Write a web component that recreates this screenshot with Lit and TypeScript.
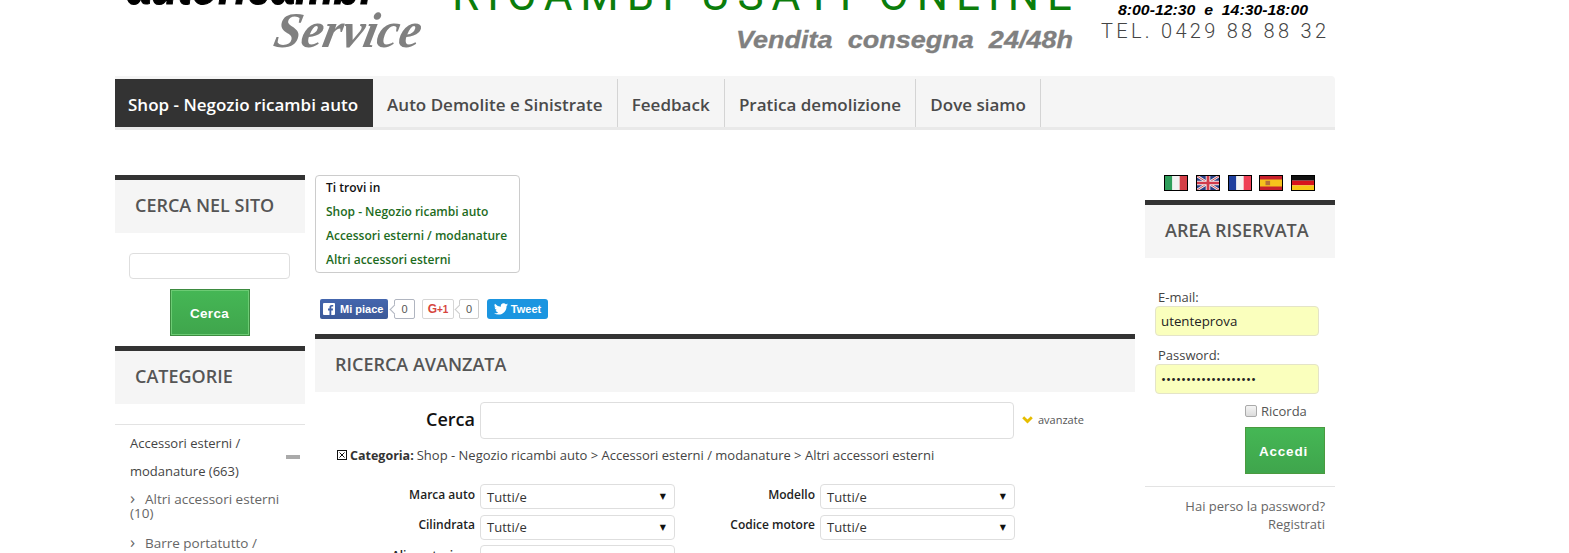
import { LitElement, html, css, svg } from "lit";
import { customElement } from "lit/decorators.js";

const banner = svg`
  <text x="12" y="4" font-family="Liberation Sans" font-weight="700" font-style="italic" font-size="58" fill="#000" stroke="#000" stroke-width="1.2" textLength="245" lengthAdjust="spacingAndGlyphs">autoricambi</text>
  <text transform="translate(157 47) skewX(-12)" font-family="Liberation Serif" font-weight="700" font-style="italic" font-size="50" fill="#808080" textLength="146" lengthAdjust="spacingAndGlyphs">Service</text>
  <text x="337" y="10" font-family="Roboto" font-weight="400" font-size="44" fill="#0b7d0b" textLength="620">RICAMBI USATI ONLINE</text>
  <text x="621" y="48" font-family="Liberation Sans" font-weight="700" font-style="italic" font-size="23" fill="#808080" stroke="#808080" stroke-width="0.3" textLength="337" lengthAdjust="spacingAndGlyphs">Vendita  consegna  24/48h</text>
  <text x="1003" y="15" font-family="Liberation Sans" font-weight="700" font-style="italic" font-size="15" fill="#000" textLength="190" lengthAdjust="spacingAndGlyphs">8:00-12:30  e  14:30-18:00</text>
  <text x="986" y="38" font-family="Roboto" font-weight="300" font-size="20" fill="#444" textLength="225">TEL. 0429 88 88 32</text>
`;

const flags = [
  svg`<rect width="8" height="16" fill="#2f9e5b"/><rect x="8" width="8" height="16" fill="#f2f2f2"/><rect x="16" width="8" height="16" fill="#d43f47"/>`,
  svg`<rect width="24" height="16" fill="#2b3f86"/><path d="M0 0L24 16M24 0L0 16" stroke="#eee" stroke-width="3"/><path d="M0 0L24 16M24 0L0 16" stroke="#d23b4b" stroke-width="1"/><path d="M12 0V16M0 8H24" stroke="#eee" stroke-width="5"/><path d="M12 0V16M0 8H24" stroke="#d23b4b" stroke-width="3"/>`,
  svg`<rect width="8" height="16" fill="#1f3f9e"/><rect x="8" width="8" height="16" fill="#f5f5f5"/><rect x="16" width="8" height="16" fill="#ef4056"/>`,
  svg`<rect width="24" height="16" fill="#c8202b"/><rect y="4" width="24" height="8" fill="#f6c21c"/><rect x="6" y="5.500" width="5" height="5" fill="#b5713a"/>`,
  svg`<rect width="24" height="5.300" fill="#111"/><rect y="5.300" width="24" height="5.400" fill="#d8141c"/><rect y="10.700" width="24" height="5.300" fill="#f7c714"/>`,
];

const navItems = ["Shop - Negozio ricambi auto", "Auto Demolite e Sinistrate", "Feedback", "Pratica demolizione", "Dove siamo"];

@customElement("app-root")
export class AppRoot extends LitElement {
  static styles = css`
    :host {
      display: block;
      height: 553px;
      overflow: hidden;
      background: #fff;
      font-family: "Open Sans", sans-serif;
      font-size: 13px;
      color: #444;
    }
    .page { width: 1220px; margin-left: 115px; }
    .banner { display: block; width: 1220px; height: 76px; }
    .banner text { white-space: pre; }
    .nav {
      display: flex;
      height: 48px;
      padding-top: 3px;
      background: #f5f5f5;
      border-bottom: 3px solid #e9e9e9;
      border-radius: 0 4px 0 0;
    }
    .nav a {
      display: flex;
      align-items: center;
      padding: 2px 14.300px 0 14px;
      font-size: 17px;
      font-weight: 600;
      color: #4a4a4a;
      border-right: 1px solid #d4d4d4;
      white-space: nowrap;
    }
    .nav a.active {
      background: #333;
      color: #fff;
      border-right: 0;
      padding: 2px 15px 0 13px;
    }
    .cols {
      display: grid;
      grid-template-columns: 200px 830px 190px;
      margin-top: 45px;
    }
    .left { width: 190px; }
    .center { width: 820px; }
    h2 {
      margin: 0;
      height: 53px;
      line-height: 50px;
      border-top: 5px solid #333;
      background: #f5f5f5;
      padding-left: 20px;
      font-size: 18px;
      font-weight: 600;
      color: #555;
      text-transform: uppercase;
    }
    .input {
      box-sizing: border-box;
      display: block;
      border: 1px solid #dedede;
      border-radius: 4px;
      background: #fff;
      font: 13px "Open Sans", sans-serif;
      outline: none;
      padding: 0 6px;
    }
    .site-input { width: 161px; height: 26px; margin: 20px 0 0 14px; }
    .btn {
      box-sizing: border-box;
      display: block;
      height: 47px;
      border: 1px solid #3d8b40;
      box-shadow: inset 0 0 0 1px #6ccb74;
      background: linear-gradient(#45b755, #3fa54c);
      color: #fff;
      font: 700 13.500px "Liberation Sans", sans-serif;
      letter-spacing: 0.300px;
      padding: 1px 1px 0 0;
    }
    .btn-search { width: 80px; margin: 10px 0 0 55px; }
    .cat-title { margin-top: 10px; }
    .rule { height: 1px; background: #e3e3e3; }
    .cat-rule { margin-top: 20px; }
    .cat-list { margin-top: 4px; padding-left: 15px; }
    .cat-main { display: flex; align-items: center; justify-content: space-between; width: 170px; }
    .cat-main span { width: 130px; line-height: 28px; font-size: 13px; color: #444; }
    .dash { width: 14px; height: 4px; background: #aaa; }
    .sub { width: 155px; line-height: 14px; color: #666; font-size: 13.500px; margin-top: 6px; }
    .sub + .sub { margin-top: 15px; }
    .sub i { font-style: normal; display: inline-block; width: 15px; font-size: 17px; line-height: 14px; }

    .crumbs {
      box-sizing: border-box;
      width: 205px;
      height: 98px;
      border: 1px solid #ccc;
      border-radius: 4px;
      padding-left: 10px;
      font-size: 12px;
      font-weight: 600;
      line-height: 24px;
      color: #1d6b1d;
      white-space: nowrap;
    }
    .crumbs b { display: block; font-weight: 600; color: #111; }
    .crumbs span { display: block; }
    .social { display: flex; align-items: stretch; height: 20px; margin: 26px 0 0 5px; font-family: "Liberation Sans", sans-serif; }
    .fb { display: flex; align-items: center; gap: 5px; width: 68px; box-sizing: border-box; padding-left: 3px; background: linear-gradient(#4466ae, #3b5998); color: #fff; border-radius: 2px; font-weight: 700; font-size: 11px; white-space: nowrap; }
    .count { position: relative; box-sizing: border-box; display: flex; align-items: center; justify-content: center; width: 21px; margin-left: 6px; border: 1px solid #b0b5c0; border-radius: 2px; font-size: 11px; color: #555; background: #fff; }
    .count::before { content: ""; position: absolute; left: -4px; top: 6px; width: 6px; height: 6px; background: #fff; border-left: 1px solid #b0b5c0; border-bottom: 1px solid #b0b5c0; transform: rotate(45deg); }
    .count.g { margin-left: 5px; width: 20px; border-color: #ccc; }
    .count.g::before { border-color: #ccc; }
    .gp { box-sizing: border-box; width: 32px; margin-left: 7px; display: flex; align-items: center; justify-content: center; border: 1px solid #d6d6d6; border-radius: 2px; color: #d6453d; font-weight: 700; font-size: 12px; white-space: nowrap; }
    .gp small { font-size: 10px; }
    .tw { width: 61px; box-sizing: border-box; margin-left: 8px; display: flex; align-items: center; justify-content: center; gap: 3px; background: #1b95e0; color: #fff; border-radius: 3px; font-size: 11px; font-weight: 700; }
    .adv-title { margin-top: 15px; }
    .search { display: flex; align-items: center; margin-top: 10px; height: 37px; }
    .search label { width: 160px; text-align: right; font-size: 18px; font-weight: 600; color: #111; padding-bottom: 4px; }
    .search .input { width: 534px; height: 37px; margin-left: 5px; }
    .adv { display: flex; align-items: center; gap: 5px; margin-left: 8px; padding-bottom: 2px; font-size: 11px; color: #555; }
    .cat-line { display: flex; align-items: center; gap: 3px; height: 20px; margin: 6px 0 0 22px; font-size: 13px; color: #444; white-space: pre; }
    .cat-line b { font-weight: 700; font-size: 12.500px; color: #333; }
    .xbox { box-sizing: border-box; width: 10px; height: 10px; border: 1px solid #111; overflow: hidden; }
    .xbox svg { display: block; }
    .filters {
      display: grid;
      grid-template-columns: 160px 195px 135px 195px;
      grid-auto-rows: 25px;
      column-gap: 5px;
      row-gap: 5.500px;
      margin-top: 19px;
      align-items: center;
    }
    .filters label { text-align: right; font-size: 12px; font-weight: 600; color: #222; white-space: nowrap; padding-bottom: 5px; }
    .select {
      box-sizing: border-box;
      height: 25px;
      display: flex;
      align-items: center;
      justify-content: space-between;
      padding: 0 8px 0 6px;
      border: 1px solid #dedede;
      border-radius: 4px;
      font-size: 13px;
      color: #333;
    }
    .select i { font-style: normal; font-size: 8px; color: #111; font-family: "DejaVu Sans", sans-serif; }

    .flags { display: flex; gap: 7.800px; height: 16px; margin-left: 19px; }
    .flags svg { display: block; box-sizing: border-box; border: 1px solid #000; }
    .area-title { margin-top: 9px; }
    .login { display: flex; flex-direction: column; align-items: flex-start; }
    .login label { line-height: 16px; margin-left: 13px; font-size: 13px; color: #444; }
    .login label.first { margin-top: 31px; }
    .login label.second { margin-top: 11px; }
    .yellow {
      width: 164px;
      height: 30px;
      margin: 1px 0 0 10px;
      background: #faffbd;
      border-color: #e4e4c8;
      color: #222;
      padding: 0 5px;
      font-size: 13.300px;
    }
    .remember { display: flex; align-items: center; gap: 4px; height: 16px; margin: 9px 0 0 100px; font-size: 13px; color: #555; }
    .remember span.box { box-sizing: border-box; width: 12px; height: 12px; border: 1px solid #aaa; border-radius: 2px; background: linear-gradient(#f4f4f4, #dcdcdc); }
    .btn-login { width: 80px; margin: 8px 0 0 100px; border-color: #4a9a3f; box-shadow: none; letter-spacing: 0.800px; padding-right: 3px; }
    .login-rule { width: 190px; margin-top: 12px; }
    .links { width: 180px; margin-top: 10px; text-align: right; line-height: 18px; color: #666; font-size: 13px; }
  `;

  render() {
    return html`
      <div class="page">
        <svg class="banner" viewBox="0 0 1220 76">${banner}</svg>
        <nav class="nav">
          ${navItems.map((n, i) => html`<a class=${i === 0 ? "active" : ""}>${n}</a>`)}
        </nav>
        <div class="cols">
          <aside class="left">
            <h2>Cerca nel sito</h2>
            <input class="input site-input" />
            <button class="btn btn-search">Cerca</button>
            <h2 class="cat-title">Categorie</h2>
            <div class="rule cat-rule"></div>
            <div class="cat-list">
              <div class="cat-main"><span>Accessori esterni / modanature (663)</span><div class="dash"></div></div>
              <div class="sub"><i>›</i>Altri accessori esterni (10)</div>
              <div class="sub"><i>›</i>Barre portatutto / accessori tetto (106)</div>
            </div>
          </aside>
          <main class="center">
            <div class="crumbs">
              <b>Ti trovi in</b>
              <span>Shop - Negozio ricambi auto</span>
              <span>Accessori esterni / modanature</span>
              <span>Altri accessori esterni</span>
            </div>
            <div class="social">
              <div class="fb">
                <svg width="12" height="12" viewBox="0 0 12 12"><rect width="12" height="12" rx="1" fill="#fff"/><path d="M8.300 12V7.400h1.500l.2-1.800H8.300V4.500c0-.5.2-.9.9-.9h1V2c-.2 0-.8-.1-1.400-.1-1.400 0-2.300.8-2.300 2.400v1.300H5v1.800h1.500V12z" fill="#3f5fa6"/></svg>
                Mi piace
              </div>
              <div class="count">0</div>
              <div class="gp">G<small>+1</small></div>
              <div class="count g">0</div>
              <div class="tw">
                <svg width="14" height="12" viewBox="0 0 24 20"><path d="M24 2.400a9.800 9.800 0 0 1-2.800.8A4.900 4.900 0 0 0 23.300.5a9.800 9.800 0 0 1-3.100 1.200 4.900 4.900 0 0 0-8.400 4.500A14 14 0 0 1 1.700 1a4.900 4.900 0 0 0 1.500 6.600 4.900 4.900 0 0 1-2.200-.6v.1a4.900 4.900 0 0 0 3.900 4.800 4.900 4.900 0 0 1-2.200.1 4.900 4.900 0 0 0 4.600 3.400A9.900 9.900 0 0 1 0 17.400 14 14 0 0 0 7.500 19.600c9.100 0 14-7.500 14-14v-.6A10 10 0 0 0 24 2.400z" fill="#fff"/></svg>
                Tweet
              </div>
            </div>
            <h2 class="adv-title">Ricerca avanzata</h2>
            <div class="search">
              <label>Cerca</label>
              <input class="input" />
              <div class="adv">
                <svg width="11" height="8" viewBox="0 0 11 8"><path d="M1.200 1.200L5.500 5.500L9.800 1.200" fill="none" stroke="#e6bd00" stroke-width="2.800"/></svg>
                avanzate
              </div>
            </div>
            <div class="cat-line"><span class="xbox"><svg width="8" height="8" viewBox="0 0 8 8"><path d="M1.500 1.500L6.500 6.500M6.500 1.500L1.500 6.500" stroke="#111" stroke-width="1"/></svg></span><b>Categoria:</b><span>Shop - Negozio ricambi auto &gt; Accessori esterni / modanature &gt; Altri accessori esterni</span></div>
            <div class="filters">
              <label>Marca auto</label><div class="select">Tutti/e<i>▼</i></div>
              <label>Modello</label><div class="select">Tutti/e<i>▼</i></div>
              <label>Cilindrata</label><div class="select">Tutti/e<i>▼</i></div>
              <label>Codice motore</label><div class="select">Tutti/e<i>▼</i></div>
              <label>Alimentazione</label><div class="select">Tutti/e<i>▼</i></div>
            </div>
          </main>
          <aside>
            <div class="flags">
              ${flags.map((f) => html`<svg width="24" height="16" viewBox="0 0 24 16" preserveAspectRatio="none">${f}</svg>`)}
            </div>
            <h2 class="area-title">Area riservata</h2>
            <div class="login">
              <label class="first">E-mail:</label>
              <input class="input yellow" value="utenteprova" />
              <label class="second">Password:</label>
              <input class="input yellow" type="password" value="aaaaaaaaaaaaaaaaaaa" />
              <div class="remember"><span class="box"></span>Ricorda</div>
              <button class="btn btn-login">Accedi</button>
              <div class="rule login-rule"></div>
              <div class="links">Hai perso la password?<br />Registrati</div>
            </div>
          </aside>
        </div>
      </div>
    `;
  }
}
